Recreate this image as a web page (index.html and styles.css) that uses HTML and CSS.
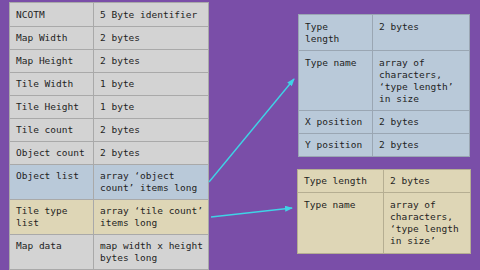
FILE: index.html
```html
<!DOCTYPE html>
<html>
<head>
<meta charset="utf-8">
<link rel="stylesheet" href="styles.css">
</head>
<body>
<div class="page">
  <table class="tbl main">
    <colgroup><col class="c-main-1"><col class="c-main-2"></colgroup>
    <tr class="first"><td>NCOTM</td><td>5 Byte identifier</td></tr>
    <tr><td>Map Width</td><td>2 bytes</td></tr>
    <tr><td>Map Height</td><td>2 bytes</td></tr>
    <tr><td>Tile Width</td><td>1 byte</td></tr>
    <tr><td>Tile Height</td><td>1 byte</td></tr>
    <tr><td>Tile count</td><td>2 bytes</td></tr>
    <tr><td>Object count</td><td>2 bytes</td></tr>
    <tr class="blue"><td>Object list</td><td>array ‘object count’ items long</td></tr>
    <tr class="tan"><td>Tile type list</td><td>array ‘tile count’ items long</td></tr>
    <tr><td>Map data</td><td>map width x height bytes long</td></tr>
  </table>
  <div class="side">
    <table class="tbl obj blue">
      <colgroup><col class="c-obj-1"><col class="c-obj-2"></colgroup>
      <tr class="tall"><td>Type length</td><td>2 bytes</td></tr>
      <tr class="tall"><td>Type name</td><td>array of characters, ‘type length’ in size</td></tr>
      <tr><td>X position</td><td>2 bytes</td></tr>
      <tr><td>Y position</td><td>2 bytes</td></tr>
    </table>
    <table class="tbl tile tan">
      <colgroup><col class="c-tile-1"><col class="c-tile-2"></colgroup>
      <tr><td>Type length</td><td>2 bytes</td></tr>
      <tr class="tall"><td>Type name</td><td>array of characters, ‘type length in size’</td></tr>
    </table>
  </div>
  <svg class="arrows" width="480" height="270" viewBox="0 0 480 270">
    <defs>
      <marker id="ah" markerWidth="8" markerHeight="6" refX="7" refY="3" orient="auto" markerUnits="userSpaceOnUse">
        <path d="M0,0 L8,3 L0,6 Z" fill="#3fd3e6"/>
      </marker>
    </defs>
    <line x1="209" y1="182" x2="294" y2="79" stroke="#3fd3e6" stroke-width="1.4" marker-end="url(#ah)"/>
    <line x1="211" y1="217" x2="292" y2="208" stroke="#3fd3e6" stroke-width="1.4" marker-end="url(#ah)"/>
  </svg>
</div>
</body>
</html>
```

FILE: styles.css
```css
html, body {
  margin: 0;
  padding: 0;
  background: #7a4ea8;
  overflow: hidden;
}
.page {
  position: relative;
  width: 480px;
  height: 270px;
  display: flex;
  align-items: flex-start;
  padding: 2px 0 0 9px;
  box-sizing: border-box;
  gap: 88px;
  font-family: "DejaVu Sans Mono", "Liberation Mono", monospace;
  font-size: 9.5px;
  line-height: 12px;
  color: #1e1e1e;
}
.tbl {
  border-collapse: collapse;
  table-layout: fixed;
}
.tbl td {
  border: 1px solid #a9a9a9;
  padding: 5px 5px 5px 6px;
  vertical-align: top;
  word-wrap: break-word;
}
.main {
  width: 199px;
  background: #d3d3d3;
  flex: none;
}
.main tr.first td {
  padding-top: 6px;
}
.c-main-1 { width: 84px; }
.c-main-2 { width: 115px; }
.main tr.blue td { background: #b9c9d9; }
.main tr.tan td { background: #ded6b6; }
.side {
  display: flex;
  flex-direction: column;
  gap: 12px;
  padding-top: 12px;
}
.obj {
  width: 171px;
  margin-left: 1px;
}
.obj.blue { background: #b9c9d9; }
.obj td { border-color: #9aa6b3; }
.obj tr.tall td { padding-top: 6px; }
.c-obj-1 { width: 74px; }
.c-obj-2 { width: 97px; }
.tile {
  width: 173px;
}
.tile.tan { background: #ded6b6; }
.tile td { border-color: #b5ae92; }
.tile tr.tall td {
  padding-top: 6px;
  padding-bottom: 6px;
}
.c-tile-1 { width: 86px; }
.c-tile-2 { width: 87px; }
.arrows {
  position: absolute;
  left: 0;
  top: 0;
  pointer-events: none;
}
```
